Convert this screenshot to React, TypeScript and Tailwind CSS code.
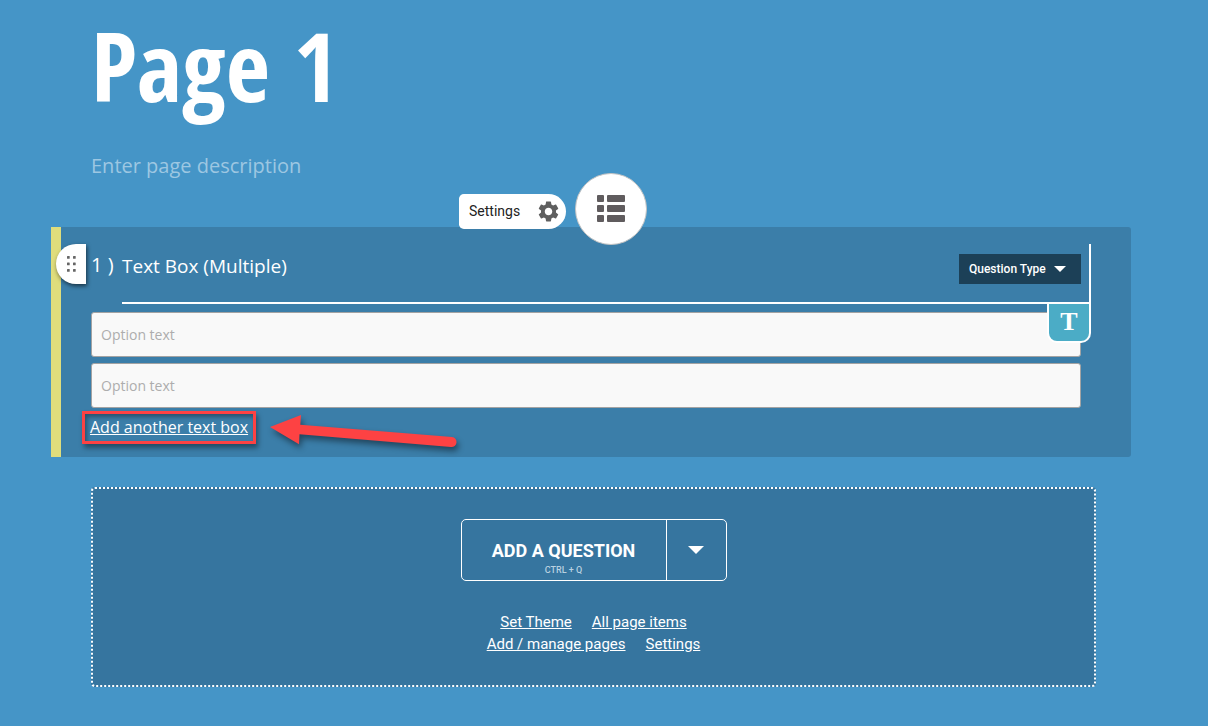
import React from 'react'
import { MdSettings } from 'react-icons/md'

function ListIcon() {
  return (
    <svg viewBox="0 0 28 28" className="w-7 h-7" fill="#605c5e" aria-hidden="true">
      <rect x="0" y="0" width="7" height="7" rx="1" />
      <rect x="10" y="0" width="18" height="7" rx="1" />
      <rect x="0" y="10" width="7" height="7" rx="1" />
      <rect x="10" y="10" width="18" height="7" rx="1" />
      <rect x="0" y="20" width="7" height="7" rx="1" />
      <rect x="10" y="20" width="18" height="7" rx="1" />
    </svg>
  )
}

function DragIcon() {
  return (
    <svg viewBox="0 0 9 16" className="w-[9px] h-4" fill="#666666" aria-hidden="true">
      <rect x="0" y="0" width="2.700" height="2.700" rx=".5" />
      <rect x="6" y="0" width="2.700" height="2.700" rx=".5" />
      <rect x="0" y="6.500" width="2.700" height="2.700" rx=".5" />
      <rect x="6" y="6.500" width="2.700" height="2.700" rx=".5" />
      <rect x="0" y="13" width="2.700" height="2.700" rx=".5" />
      <rect x="6" y="13" width="2.700" height="2.700" rx=".5" />
    </svg>
  )
}

function Caret({ className }: { className: string }) {
  return (
    <svg viewBox="0 0 16 8" className={className} fill="#ffffff" aria-hidden="true">
      <path d="M0 0h16L8 8z" />
    </svg>
  )
}

function Arrow() {
  return (
    <svg
      viewBox="0 0 200 50"
      className="absolute left-full top-0 ml-4 w-[200px] h-[50px] max-w-none overflow-visible drop-shadow-[2px_4px_3px_rgba(0,0,0,0.45)]"
      fill="#fd4243"
      aria-hidden="true"
    >
      <path d="M1 13 32 1l-.7 9.700L183 23a5 5 0 0 1-1 10L30.500 20.300 30 30.300z" />
    </svg>
  )
}

function QuestionCard() {
  return (
    <section className="relative mt-[46px] border-l-[10px] border-[#dfdd7c] rounded-r-[3px] bg-[#3b7ea9] pt-[17px] pb-[13px] pl-[30px] pr-10">
      <div className="absolute inset-x-0 -top-[54px] flex items-center justify-center gap-[9px] pr-[86px]">
        <button className="flex items-center justify-between w-[107px] h-[35px] mt-1 pl-[10px] pr-[5px] rounded-l-[5px] rounded-r-[18px] bg-white text-[14px] text-[#222222]">
          Settings
          <MdSettings size={25} color="#5f5f5f" />
        </button>
        <button
          aria-label="Question list"
          className="flex items-center justify-center w-[72px] h-[72px] rounded-full border border-[#c4c4c4] bg-white"
        >
          <ListIcon />
        </button>
      </div>
      <button
        aria-label="Move question"
        className="absolute -left-[5px] top-[17px] flex items-center justify-center w-[30px] h-10 rounded-l-[20px] bg-white shadow-[1px_2px_4px_rgba(0,0,0,0.6)]"
      >
        <DragIcon />
      </button>

      <div className="flex font-['Open_Sans','Noto_Sans',sans-serif] text-xl text-white">
        <span className="w-[31px] shrink-0 pt-[7px] leading-7">1 )</span>
        <div className="relative flex flex-1 items-start justify-between h-[60px] pr-2 border-r-2 border-b-2 border-white">
          <h2 className="pt-2 text-[19px] leading-7">Text Box (Multiple)</h2>
          <button className="flex items-center gap-2 h-[30px] mt-[10px] px-[10px] w-[122px] bg-[#1c4057] font-[Roboto,sans-serif] text-xs font-medium whitespace-nowrap">
            Question Type
            <Caret className="w-3 h-[6px]" />
          </button>
          <button
            aria-label="Text formatting"
            className="absolute -right-[2px] top-[60px] flex items-center justify-center w-11 h-[39px] rounded-b-[10px] border-2 border-t-0 border-white bg-[#4bacc6] font-['Liberation_Serif',serif] text-[26px] font-bold"
          >
            T
          </button>
        </div>
      </div>

      <div className="grid gap-[6px] mt-2 pr-[10px] font-['Open_Sans','Noto_Sans',sans-serif]">
        <input
          type="text"
          aria-label="Option 1"
          placeholder="Option text"
          className="w-full h-[45px] px-[9px] rounded-[3px] border border-[#a3a3a3] bg-[#f9f9f9] text-sm text-[#333333] placeholder:text-[#adadad]"
        />
        <input
          type="text"
          aria-label="Option 2"
          placeholder="Option text"
          className="w-full h-[45px] px-[9px] rounded-[3px] border border-[#a3a3a3] bg-[#f9f9f9] text-sm text-[#333333] placeholder:text-[#adadad]"
        />
      </div>

      <div className="relative w-fit mt-[3px] -ml-[9px] px-[5px] py-1 border-[3px] border-[#fd4243] shadow-[2px_4px_5px_rgba(0,0,0,0.4),inset_2px_3px_4px_rgba(0,0,0,0.35)]">
        <a
          href="#add-text-box"
          className="block font-['Open_Sans','Noto_Sans',sans-serif] text-base leading-[19px] text-white underline"
        >
          Add another text box
        </a>
        <Arrow />
      </div>
    </section>
  )
}

function AddQuestion() {
  return (
    <section className="flex flex-col items-center mt-[30px] ml-10 mr-[35px] py-[30px] rounded-[4px] border-2 border-dotted border-white bg-[#36759f] text-white">
      <div className="flex h-[62px] rounded-[5px] border border-white">
        <button className="flex flex-col items-center w-[204px] pt-[21px] text-lg leading-5 font-bold">
          ADD A QUESTION
          <span className="text-[9px] leading-[18px] font-medium text-[#b9d1e0]">CTRL + Q</span>
        </button>
        <button aria-label="More question options" className="flex items-center justify-center w-[60px] border-l border-white">
          <Caret className="w-4 h-2" />
        </button>
      </div>
      <nav className="grid mt-[30px] text-[15px] leading-[22px] underline">
        <div className="flex justify-center gap-5">
          <a href="#theme">Set Theme</a>
          <a href="#items">All page items</a>
        </div>
        <div className="flex justify-center gap-5">
          <a href="#pages">Add / manage pages</a>
          <a href="#settings">Settings</a>
        </div>
      </nav>
    </section>
  )
}

export default function App() {
  return (
    <main className="min-h-screen bg-[#4595c7] pt-[17px] pb-[39px] pl-[51px] pr-[77px] font-[Roboto,sans-serif]">
      <header className="ml-10">
        <h1 className="font-['Open_Sans_Condensed','Liberation_Sans_Narrow','Open_Sans',sans-serif] text-8xl font-bold leading-[96px] text-white">
          Page 1
        </h1>
        <input
          type="text"
          aria-label="Page description"
          placeholder="Enter page description"
          className="block w-full h-8 mt-9 bg-transparent font-['Open_Sans','Noto_Sans',sans-serif] text-xl text-white placeholder:text-[#9dc7e2]"
        />
      </header>
      <QuestionCard />
      <AddQuestion />
    </main>
  )
}
